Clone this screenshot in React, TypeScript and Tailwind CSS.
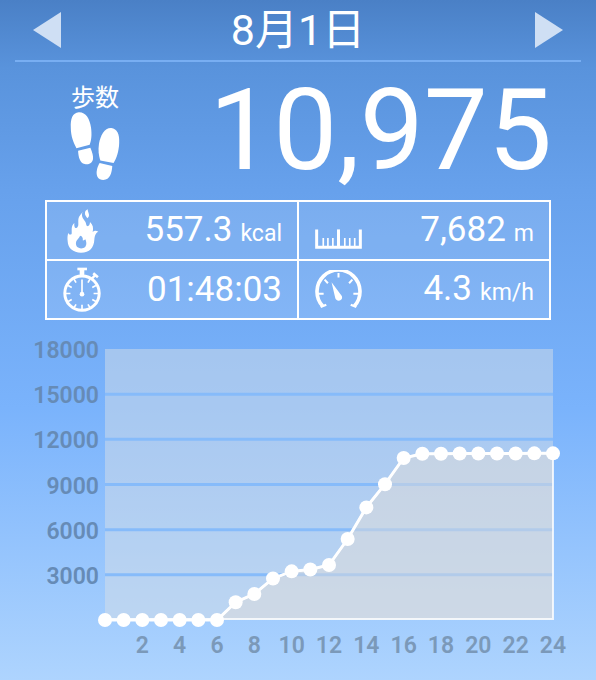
import type { ReactNode } from "react";

const hourly = [
  0, 0, 0, 0, 0, 0, 0, 1180, 1730, 2760, 3230, 3350, 3650, 5380, 7480, 9020,
  10760, 11040, 11040, 11060, 11060, 11060, 11060, 11070, 11070,
];
const ticks = [18000, 15000, 12000, 9000, 6000, 3000];
const hours = [2, 4, 6, 8, 10, 12, 14, 16, 18, 20, 22, 24];

const LEFT = 105;
const RIGHT = 553;
const TOP = 15;
const BASE = 286;
const px = (hour: number) => LEFT + (hour * (RIGHT - LEFT)) / 24;
const py = (steps: number) => BASE - (steps * (BASE - TOP)) / 18000;

function Footprints() {
  return (
    <svg viewBox="90 110 150 208" className="h-[69px] w-[50px]" fill="currentColor" aria-hidden="true">
      <path d="M116 111C137 110 149 130 153 157C156 181 154 195 149 209L109 219C101 204 92 184 92 157C91 130 97 113 116 111Z" />
      <path d="M114 227L151 218C157 231 160 243 159 252C157 265 145 270 134 267C119 264 115 246 114 227Z" />
      <path d="M214 158C232 160 239 177 238 203C237 229 230 249 221 264L181 256C176 241 174 226 177 206C181 180 194 157 214 158Z" />
      <path d="M179 264L217 273C216 294 210 315 190 315C174 314 169 303 170 290C171 279 175 270 179 264Z" />
    </svg>
  );
}

function Flame() {
  return (
    <svg viewBox="34 25 96 132" className="h-[44px] w-[32px]" fill="currentColor" aria-hidden="true">
      <path
        fillRule="evenodd"
        d="M81 33C75 45 82 53 89 63C92 68 91 73 94 76C99 78 103 72 103 64C112 72 114 83 111 94C116 89 122 90 128 93C119 97 117 106 116 117C115 140 102 156 76 156C52 156 37 143 36 122C35 112 35 105 38 96C39 102 46 104 48 99C49 89 45 77 56 67C55 76 57 84 62 82C71 77 67 68 68 57C69 45 76 42 81 33ZM75 105C71 106 70 113 65 117C58 125 61 135 66 140C72 145 84 144 89 138C94 131 92 123 89 116C86 119 84 120 81 119C83 114 80 107 75 105Z"
      />
      <path d="M96 26C96 33 100 38 100 43C100 48 98 50 95 53C92 47 87 44 88 37C88 32 91 29 96 26Z" />
    </svg>
  );
}

function Stopwatch() {
  return (
    <svg viewBox="65 214 117 136" className="h-[45px] w-[39px]" fill="none" stroke="currentColor" aria-hidden="true">
      <circle cx="122" cy="293" r="52" strokeWidth="9" />
      <path d="M108 220H137" strokeWidth="8" />
      <path d="M122 222V242" strokeWidth="14" />
      <path d="M151 250L163 238" strokeWidth="7" />
      <path d="M156 233L170 245" strokeWidth="8" />
      <path d="M122 252V294" strokeWidth="5" />
      <circle cx="122" cy="296" r="7" fill="currentColor" stroke="none" />
      <path
        d="M122 328V344M72 294H87M157 294H172M80 270L91 276M98 251L104 261M164 270L153 276M146 251L140 261M80 318L91 312M98 337L104 327M164 318L153 312M146 337L140 327"
        strokeWidth="5"
      />
    </svg>
  );
}

function Ruler() {
  return (
    <svg viewBox="62 100 142 60" className="mt-4 h-[20px] w-[47px]" fill="none" stroke="currentColor" aria-hidden="true">
      <path d="M67 101V155H199V101" strokeWidth="9" />
      <path d="M133 101V155" strokeWidth="9" />
      <path d="M87 127V155M101 127V155M116 127V155M152 127V155M167 127V155M182 127V155" strokeWidth="5" />
    </svg>
  );
}

function Gauge() {
  return (
    <svg viewBox="62 223 142 118" className="h-[39px] w-[47px]" fill="none" stroke="currentColor" aria-hidden="true">
      <path d="M85 332A65 65 0 1 1 181 332" strokeWidth="11" />
      <path d="M79 335L96 328M187 335L170 328" strokeWidth="7" />
      <path d="M133 232V246M73 295H88M193 295H178M91 252L101 263M175 252L165 263" strokeWidth="6" />
      <path d="M112 260L143 302C146 310 141 316 134 316C128 316 124 312 123 307Z" fill="currentColor" stroke="none" />
    </svg>
  );
}

function Stat({ icon, label, value, unit }: { icon: ReactNode; label: string; value: string; unit?: string }) {
  return (
    <div className="flex h-[57px] items-center bg-white/12 pr-[15px] pl-4">
      <dt className="flex min-w-[39px] justify-center" aria-label={label}>
        {icon}
      </dt>
      <dd className="ml-auto flex items-baseline gap-2 whitespace-nowrap">
        <span className="text-[35px] leading-10">{value}</span>
        {unit && <span className="text-[23px]">{unit}</span>}
      </dd>
    </div>
  );
}

function StepChart() {
  const line = hourly.map((s, h) => `${px(h)},${py(s)}`).join(" ");
  return (
    <svg viewBox="0 0 596 346" className="block w-full" role="img" aria-label="歩数グラフ">
      <rect x={LEFT} y={TOP} width={RIGHT - LEFT} height={BASE - TOP} fill="#d9dfe6" fillOpacity="0.48" />
      {ticks.map((t) => (
        <g key={t}>
          {t < 18000 && <path d={`M${LEFT} ${py(t)}H${RIGHT}`} className="stroke-[#86bbfa]" strokeWidth="3" />}
          <text x="99" y={py(t) + 9} textAnchor="end" className="fill-[#668bb6] text-[23px] font-semibold">
            {t}
          </text>
        </g>
      ))}
      <polygon
        points={`${line} ${RIGHT},${BASE - 1} ${LEFT},${BASE - 1}`}
        fill="#dedbd9"
        fillOpacity="0.5"
        className="stroke-white/80"
        strokeWidth="2"
      />
      <polyline points={line} fill="none" className="stroke-white" strokeWidth="3" />
      {hourly.map((s, h) => (
        <circle key={h} cx={px(h)} cy={py(s)} r="7" className="fill-white" />
      ))}
      {hours.map((h) => (
        <text key={h} x={px(h)} y="319" textAnchor="middle" className="fill-[#7b99b9] text-[23px] font-semibold">
          {h}
        </text>
      ))}
    </svg>
  );
}

export default function App() {
  return (
    <main className="min-h-screen bg-[linear-gradient(#4a80c6,#5993dc_10%,#67a1ec_28%,#7ab3fc_60%,#aed4fe)] font-['Roboto','Noto_Sans_CJK_JP',sans-serif] text-white">
      <header className="mx-[15px] flex h-[62px] items-center justify-between border-b-2 border-[#78aef2] px-[18px]">
        <button type="button" aria-label="前の日">
          <svg viewBox="0 0 28 36" className="h-9 w-7 fill-[#cfdff4]">
            <path d="M0 18L28 0V36Z" />
          </svg>
        </button>
        <h1 className="text-[43px] leading-none">8月1日</h1>
        <button type="button" aria-label="次の日">
          <svg viewBox="0 0 28 36" className="h-9 w-7 fill-[#cfdff4]">
            <path d="M28 18L0 0V36Z" />
          </svg>
        </button>
      </header>

      <section className="flex h-[138px] items-start justify-between pr-[44px] pl-[70px]">
        <div className="flex flex-col items-center pt-[22px]">
          <h2 className="text-2xl leading-7">歩数</h2>
          <Footprints />
        </div>
        <p className="pt-[8px] text-[114px] leading-[120px]">10,975</p>
      </section>

      <dl className="mx-[45px] grid grid-cols-2 gap-[2px] border-2 border-white bg-[linear-gradient(white,white),linear-gradient(white,white)] bg-[length:2px_100%,100%_2px] bg-center bg-no-repeat">
        <Stat icon={<Flame />} label="消費カロリー" value="557.3" unit="kcal" />
        <Stat icon={<Ruler />} label="距離" value="7,682" unit="m" />
        <Stat icon={<Stopwatch />} label="時間" value="01:48:03" />
        <Stat icon={<Gauge />} label="速度" value="4.3" unit="km/h" />
      </dl>

      <section className="mt-[14px]">
        <StepChart />
      </section>
    </main>
  );
}
